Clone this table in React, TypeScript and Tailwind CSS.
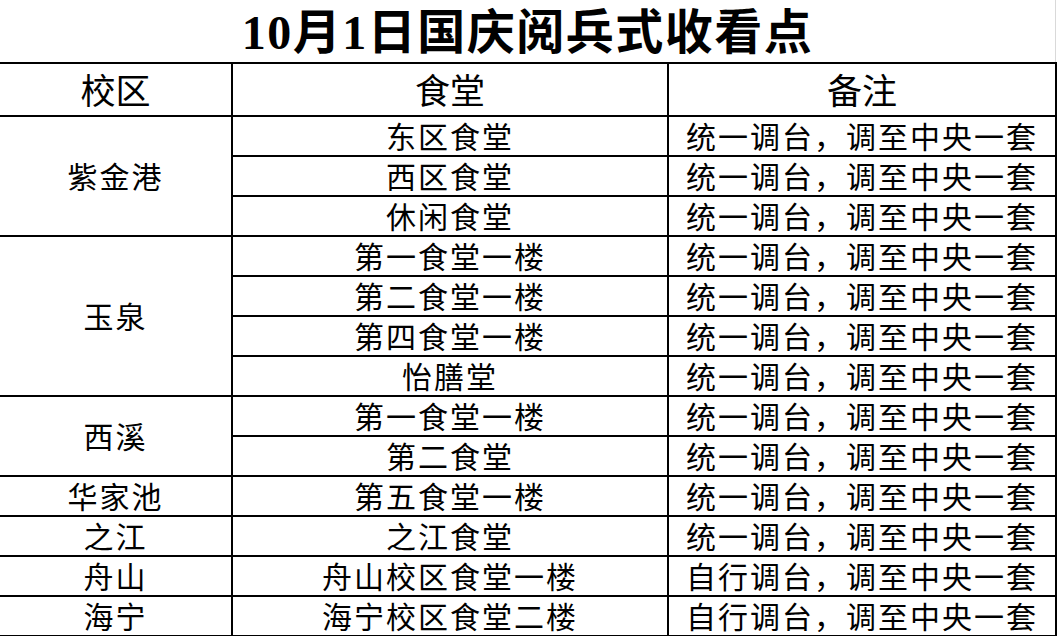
const rows: { campus?: string; span?: number; hall: string; note: string }[] = [
  { campus: "紫金港", span: 3, hall: "东区食堂", note: "统一调台，调至中央一套" },
  { hall: "西区食堂", note: "统一调台，调至中央一套" },
  { hall: "休闲食堂", note: "统一调台，调至中央一套" },
  { campus: "玉泉", span: 4, hall: "第一食堂一楼", note: "统一调台，调至中央一套" },
  { hall: "第二食堂一楼", note: "统一调台，调至中央一套" },
  { hall: "第四食堂一楼", note: "统一调台，调至中央一套" },
  { hall: "怡膳堂", note: "统一调台，调至中央一套" },
  { campus: "西溪", span: 2, hall: "第一食堂一楼", note: "统一调台，调至中央一套" },
  { hall: "第二食堂", note: "统一调台，调至中央一套" },
  { campus: "华家池", span: 1, hall: "第五食堂一楼", note: "统一调台，调至中央一套" },
  { campus: "之江", span: 1, hall: "之江食堂", note: "统一调台，调至中央一套" },
  { campus: "舟山", span: 1, hall: "舟山校区食堂一楼", note: "自行调台，调至中央一套" },
  { campus: "海宁", span: 1, hall: "海宁校区食堂二楼", note: "自行调台，调至中央一套" },
]

export default function App() {
  return (
    <div className="w-[1063px] h-[636px] overflow-hidden bg-white text-black font-['Liberation_Serif','Noto_Sans_CJK_SC',serif]">
      <div className="w-[1056px] h-[62px] flex items-center justify-center border-r border-[#d9d9d9]">
        <h1 className="text-[48px] font-bold leading-none tracking-[1.5px] pt-1">10月1日国庆阅兵式收看点</h1>
      </div>
      <table className="w-[1056px] table-fixed border-collapse">
        <colgroup>
          <col className="w-[232px]" />
          <col className="w-[436px]" />
          <col className="w-[388px]" />
        </colgroup>
        <thead>
          <tr className="h-[53px] text-[35px] leading-none">
            <th className="font-normal border-y-2 border-r-2 border-black pt-1.5">校区</th>
            <th className="font-normal border-2 border-black pt-1.5">食堂</th>
            <th className="font-normal border-2 border-black pt-1.5">备注</th>
          </tr>
        </thead>
        <tbody>
          {rows.map((row, i) => (
            <tr key={i} className="h-[40px] text-[30px] leading-none">
              {row.campus && (
                <td rowSpan={row.span} className="text-center border-y-2 border-r-2 border-black tracking-[2px] pt-1">
                  {row.campus}
                </td>
              )}
              <td className="text-center border-2 border-black tracking-[2px] pt-1">{row.hall}</td>
              <td className="text-center border-2 border-black tracking-[2px] pt-1">{row.note}</td>
            </tr>
          ))}
        </tbody>
      </table>
    </div>
  )
}
